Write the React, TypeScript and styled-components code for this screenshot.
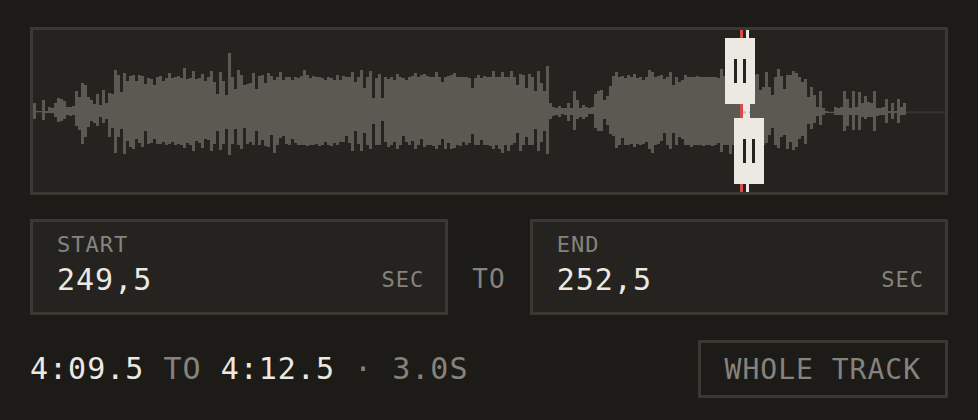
import React, { useState } from "react";
import styled, { createGlobalStyle } from "styled-components";

const color = {
  page: "#1d1b17",
  panel: "#252320",
  line: "#393833",
  wave: "#5a5a53",
  text: "#ece9e2",
  muted: "#85837c",
  accent: "#d94a48",
};

const GlobalStyle = createGlobalStyle`
  * { box-sizing: border-box; }
  body {
    margin: 0;
    background: ${color.page};
    color: ${color.text};
    font-family: "DejaVu Sans Mono", monospace;
    letter-spacing: 1px;
  }
`;

const Page = styled.main`
  display: flex;
  flex-direction: column;
  gap: 24px;
  padding: 27px 30px 22px;
`;

const Track = styled.section`
  position: relative;
  height: 168px;
  border: 3px solid ${color.line};
  background: ${color.panel};
`;

const Wave = styled.svg`
  display: block;
  width: 100%;
  height: 100%;
`;

const Marker = styled.div<{ $tone: string; $end?: boolean }>`
  position: absolute;
  top: 0;
  bottom: 0;
  width: 3px;
  margin-left: ${(p) => (p.$end ? "-3px" : "0")};
  background: ${(p) => p.$tone};
`;

const Handle = styled.input<{ $edge: "top" | "bottom" }>`
  position: absolute;
  ${(p) => p.$edge}: 8px;
  left: -15px;
  width: calc(100% + 30px);
  height: 66px;
  margin: 0;
  appearance: none;
  background: none;
  pointer-events: none;

  &::-webkit-slider-thumb {
    appearance: none;
    width: 30px;
    height: 66px;
    border: 0;
    border-radius: 0;
    pointer-events: auto;
    cursor: ew-resize;
    background:
      linear-gradient(${color.panel}, ${color.panel}) 9px 21px / 3px 24px no-repeat,
      linear-gradient(${color.panel}, ${color.panel}) 18px 21px / 3px 24px no-repeat,
      ${color.text};
  }
`;

const Fields = styled.div`
  display: grid;
  grid-template-columns: 1fr auto 1fr;
  align-items: end;
  gap: 24px;
`;

const Field = styled.label`
  display: block;
  min-width: 0;
  padding: 9px 21px 13px 24px;
  border: 3px solid ${color.line};
  background: ${color.panel};
`;

const Caption = styled.span`
  display: block;
  font-size: 22px;
  line-height: 28px;
  color: ${color.muted};
`;

const ValueRow = styled.span`
  display: flex;
  align-items: center;
`;

const ValueInput = styled.input`
  flex: 1;
  min-width: 0;
  height: 40px;
  padding: 0;
  border: 0;
  outline: 0;
  background: none;
  color: ${color.text};
  font: inherit;
  font-size: 30px;
  letter-spacing: inherit;
`;

const Unit = styled.span`
  font-size: 22px;
  color: ${color.muted};
`;

const Between = styled.span`
  padding-bottom: 15px;
  font-size: 26px;
  line-height: 42px;
  color: ${color.muted};
`;

const Footer = styled.div`
  display: flex;
  align-items: center;
  justify-content: space-between;
  gap: 24px;
  padding-top: 1px;
`;

const Summary = styled.p`
  margin: 0;
  font-size: 30px;
  line-height: 42px;
  color: ${color.muted};

  strong {
    font-weight: 400;
    color: ${color.text};
  }
`;

const WholeTrack = styled.button`
  padding: 9px 24px 7px;
  border: 3px solid ${color.line};
  background: none;
  color: ${color.muted};
  font: inherit;
  font-size: 28px;
  line-height: 36px;
  letter-spacing: inherit;
  white-space: nowrap;
  cursor: pointer;
`;

/* Upper and lower edge of each column, on a scale that runs from 30 to 516. */
const PEAKS = `
248,298 272,276 272,276 240,300 274,278 262,280 264,280 250,292 234,306 237,303
243,297 262,286 260,287 258,286 213,317 230,331 190,372 196,350 232,320 240,303
252,308 223,317 254,292 210,308 248,298 220,352 223,323 150,398 165,352 215,327
160,403 182,362 168,382 164,388 182,357 166,368 167,382 192,332 174,372 178,370
195,357 172,372 168,372 182,366 174,374 160,372 174,366 171,374 168,372 175,374
143,384 178,368 174,374 153,394 178,364 175,370 163,384 184,358 170,360 152,394
186,373 222,332 157,390 182,372 225,328 100,406 170,372 207,328 150,374 165,388
194,324 192,373 188,366 160,374 208,333 168,376 164,360 188,378 158,382
167,346 180,398 170,374 156,354 180,347 170,372 172,374 180,357 170,370 174,374
168,376 150,374 165,377 174,374 167,376 172,372 170,378 174,374 180,366 172,374
173,377 180,368 165,376 180,366 168,366 170,349 172,370 157,394 186,333 172,372
151,393 203,338 170,376 154,386 234,311 175,374 163,374 234,303 172,366 177,380
170,374 180,366 163,386 172,374 175,349 181,366 170,374 168,362 160,386 172,374
165,358 162,380 168,374 172,374 170,378 156,386 170,374 186,356 172,386 168,370
165,388 160,384 170,376 171,378 172,366 170,376 174,368 205,341 174,374 166,374
173,360 168,374 171,376 170,378 153,388 170,374 171,386 155,400 170,374 172,392
153,374 170,370 195,338
163,393 165,376 205,350 163,374 172,374 212,328 152,392 188,366 214,334 137,403
250,296 260,287 265,285 258,290 265,283 264,285 250,302 264,284 212,331 240,298
263,290 256,296 260,290 263,282 262,282 222,325 212,333 211,334 241,296 227,315
197,342 167,347 157,385 170,376 168,354 174,374 166,374 172,372 163,380 174,372
170,376 181,372 170,366 151,386 156,398 170,374 168,373 165,362 178,338 170,374
157,387 194,338 170,376 185,352 180,356 165,376 170,374 171,380 170,374 168,374
172,374 170,378 171,374 170,374 172,377 170,374 175,368 147,397 168,374 170,374
170,402 168,374 170,374 170,374 170,374 170,374 170,374 170,374
165,374 163,374 210,370 202,374 156,370 202,346 226,325 172,374 147,384 168,350
208,346 164,388 165,366 153,390 160,382 172,356 186,348 176,372 230,312 202,326
226,308 262,287 214,314 264,286 274,279 276,279 276,279 262,284 264,286 260,286
213,333 237,318 264,284 213,331 262,284 215,331 249,292 228,297 246,292 250,290
213,333 264,287 263,286 262,285 237,309 274,279 248,297 274,279 236,309 260,286
250,286
`
  .trim()
  .split(/\s+/)
  .map((pair) => pair.split(",").map(Number));

const COLUMNS = 304;
const DURATION = 321.8;

const outline = (from: number, to: number) =>
  PEAKS.slice(from, to)
    .map(([top, bottom], i) => `M${from + i} ${top}h1V${bottom}h-1z`)
    .join("");

const percent = (seconds: number) => `${(seconds / DURATION) * 100}%`;
const decimal = (seconds: number) => seconds.toFixed(1).replace(".", ",");
const clock = (seconds: number) => {
  const minutes = Math.floor(seconds / 60);
  return `${minutes}:${(seconds - minutes * 60).toFixed(1).padStart(4, "0")}`;
};

function Waveform({ start, end }: { start: number; end: number }) {
  const first = Math.ceil((start / DURATION) * COLUMNS);
  const last = Math.round((end / DURATION) * COLUMNS);
  return (
    <Wave viewBox={`0 30 ${COLUMNS} 486`} preserveAspectRatio="none" aria-hidden="true">
      <g shapeRendering="crispEdges">
        <path d={outline(0, PEAKS.length)} fill={color.wave} />
        <path d={outline(first, last)} fill={color.text} />
      </g>
      <rect x="0" y="274" width={COLUMNS} height="6" fill={color.wave} opacity="0.3" />
    </Wave>
  );
}

interface TimeFieldProps {
  label: string;
  value: number;
  onChange: (seconds: number) => void;
}

function TimeField({ label, value, onChange }: TimeFieldProps) {
  return (
    <Field>
      <Caption>{label}</Caption>
      <ValueRow>
        <ValueInput
          type="text"
          inputMode="decimal"
          value={decimal(value)}
          onChange={(e) => {
            const next = parseFloat(e.target.value.replace(",", "."));
            if (next >= 0 && next <= DURATION) onChange(next);
          }}
        />
        <Unit>SEC</Unit>
      </ValueRow>
    </Field>
  );
}

export default function App() {
  const [start, setStart] = useState(249.5);
  const [end, setEnd] = useState(252.5);

  const reset = () => {
    setStart(0);
    setEnd(DURATION);
  };

  return (
    <>
      <GlobalStyle />
      <Page>
        <Track aria-label="Track selection">
          <Waveform start={start} end={end} />
          <Marker $tone={color.accent} style={{ left: percent(start) }} />
          <Marker $tone={color.text} $end style={{ left: percent(end) }} />
          <Handle
            $edge="top"
            type="range"
            aria-label="Selection start"
            min={0}
            max={DURATION}
            step={0.1}
            value={start}
            onChange={(e) => setStart(Math.min(Number(e.target.value), end))}
          />
          <Handle
            $edge="bottom"
            type="range"
            aria-label="Selection end"
            min={0}
            max={DURATION}
            step={0.1}
            value={end}
            onChange={(e) => setEnd(Math.max(Number(e.target.value), start))}
          />
        </Track>
        <Fields>
          <TimeField label="START" value={start} onChange={setStart} />
          <Between>TO</Between>
          <TimeField label="END" value={end} onChange={setEnd} />
        </Fields>
        <Footer>
          <Summary>
            <strong>{clock(start)}</strong> TO <strong>{clock(end)}</strong> · {(end - start).toFixed(1)}S
          </Summary>
          <WholeTrack type="button" onClick={reset}>
            WHOLE TRACK
          </WholeTrack>
        </Footer>
      </Page>
    </>
  );
}
